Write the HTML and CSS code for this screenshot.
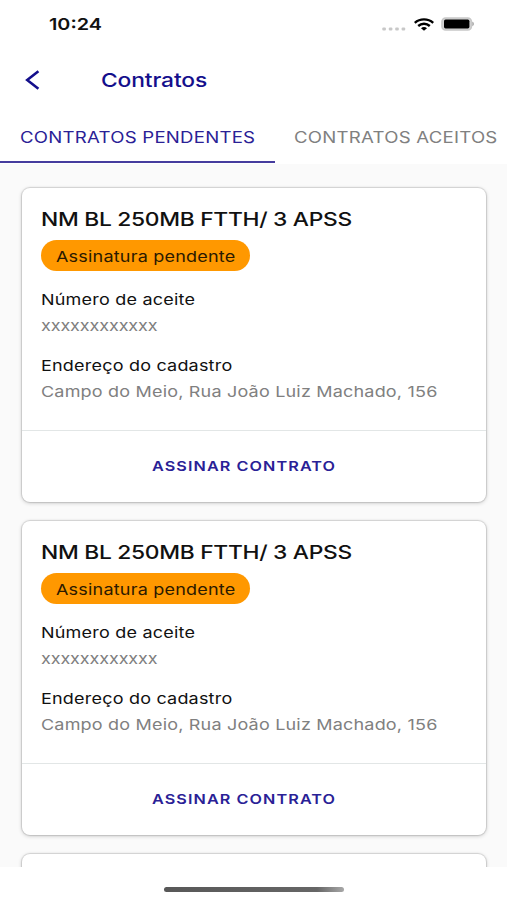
FILE: index.html
```
<!DOCTYPE html>
<html lang="pt-BR">
<head>
  <meta charset="UTF-8" />
  <title>Contratos</title>
  <link rel="stylesheet" href="styles.css">
</head>
<body>
  <!-- Barra de status -->
  <div class="status">
    <span class="hora largo">10:24</span>
    <div class="icones">
      <svg class="sinal" width="24" height="4" viewBox="0 0 24 4" fill="#c8c8c8">
        <rect x="0.3" y="0.5" width="3.6" height="3" rx="1" />
        <rect x="6.8" y="0.5" width="3.6" height="3" rx="1" />
        <rect x="13.2" y="0.5" width="3.6" height="3" rx="1" />
        <rect x="19.6" y="0.5" width="3.6" height="3" rx="1" />
      </svg>
      <svg class="wifi" width="20" height="13" viewBox="0 0 20 13" fill="none" stroke="#000" stroke-width="2.4">
        <path d="M0.8 4.8C6 0.2 14 0.2 19.2 4.8" />
        <path d="M4.2 8C7.5 5 12.5 5 15.8 8" />
        <path d="M7 10.2C8.8 8.7 11.2 8.7 13 10.2L10 12.7Z" fill="#000" stroke="none" />
      </svg>
      <svg class="bateria" width="34" height="14" viewBox="0 0 34 14">
        <rect x="1" y="1" width="29.4" height="12" rx="3.6" fill="#d4d4d4" stroke="#c8c8c8" stroke-width="1.6" />
        <rect x="3" y="2.6" width="25.4" height="8.8" rx="1.6" fill="#000" />
        <path d="M31.2 4.8C33.6 5.4 33.6 8.6 31.2 9.2Z" fill="#b0b0b0" />
      </svg>
    </div>
  </div>

  <!-- Cabeçalho -->
  <div class="topo">
    <svg class="voltar" width="16" height="20" viewBox="0 0 16 20" fill="none" stroke="#140f8c" stroke-width="2.6">
      <path d="M13.4 1.2L2.2 10L13.4 18.8" />
    </svg>
    <h1 class="largo">Contratos</h1>
  </div>

  <div class="abas">
    <div class="aba ativa"><span class="largo">CONTRATOS PENDENTES</span></div>
    <div class="aba"><span class="largo">CONTRATOS ACEITOS</span></div>
  </div>

  <!-- Lista de contratos -->
  <div class="lista">
    <div class="card">
      <div class="dados">
        <h2 class="largo">NM BL 250MB FTTH/ 3 APSS</h2>
        <div class="etiqueta"><span class="largo">Assinatura pendente</span></div>
        <p class="rotulo"><span class="largo">Número de aceite</span></p>
        <p class="valor"><span class="largo codigo">xxxxxxxxxxxx</span></p>
        <p class="rotulo"><span class="largo">Endereço do cadastro</span></p>
        <p class="valor"><span class="largo">Campo do Meio, Rua João Luiz Machado, 156</span></p>
      </div>
      <button class="assinar"><span class="largo">ASSINAR CONTRATO</span></button>
    </div>

    <div class="card">
      <div class="dados">
        <h2 class="largo">NM BL 250MB FTTH/ 3 APSS</h2>
        <div class="etiqueta"><span class="largo">Assinatura pendente</span></div>
        <p class="rotulo"><span class="largo">Número de aceite</span></p>
        <p class="valor"><span class="largo codigo">xxxxxxxxxxxx</span></p>
        <p class="rotulo"><span class="largo">Endereço do cadastro</span></p>
        <p class="valor"><span class="largo">Campo do Meio, Rua João Luiz Machado, 156</span></p>
      </div>
      <button class="assinar"><span class="largo">ASSINAR CONTRATO</span></button>
    </div>

    <div class="card"></div>
  </div>

  <div class="rodape">
    <div class="barra"></div>
  </div>
</body>
</html>
```

FILE: styles.css
```
* {
  box-sizing: border-box;
}
body {
  margin: 0;
  height: 900px;
  display: flex;
  flex-direction: column;
  overflow: hidden;
  font-family: Inter, "Liberation Sans", sans-serif;
  background-color: #fff;
  color: #111;
}
h1, h2, p {
  margin: 0;
}

/* Letras mais largas que o normal */
.largo {
  display: inline-block;
  white-space: nowrap;
  transform: scaleX(1.2);
  transform-origin: left center;
}

/* Barra de status */
.status {
  height: 48px;
  flex: none;
  display: flex;
  justify-content: space-between;
  padding: 0 32px 0 49px;
}
.hora {
  font-size: 16.5px;
  font-weight: 600;
  line-height: 49px;
}
.icones {
  display: flex;
  align-items: center;
  height: 48px;
}
.sinal {
  margin: 9px 8px 0 0;
}
.wifi {
  margin-right: 7px;
}

/* Cabeçalho */
.topo {
  height: 64px;
  flex: none;
  display: flex;
  align-items: center;
  padding-left: 25px;
}
.topo h1 {
  margin-left: 60px;
  font-size: 19px;
  font-weight: 500;
  letter-spacing: -0.1px;
  color: #140f8c;
}
.abas {
  height: 52px;
  flex: none;
  display: flex;
}
.aba {
  flex: 1;
  padding-left: 19px;
  font-size: 15.5px;
  letter-spacing: 0.2px;
  line-height: 51px;
  color: #808080;
}
.ativa {
  flex: 0 0 275px;
  height: 51px;
  padding-left: 20px;
  color: #2a2196;
  border-bottom: 2px solid #453c9e;
}

/* Lista de contratos */
.lista {
  flex: 1;
  min-height: 0;
  overflow: hidden;
  display: flex;
  flex-direction: column;
  gap: 19px;
  padding: 24px 21px 0 22px;
  background-color: #fafafa;
}
.card {
  height: 314px;
  flex: none;
  display: flex;
  flex-direction: column;
  border-radius: 8px;
  background-color: #fff;
  box-shadow: 0 1px 4px rgba(0,0,0,0.2), 0 0 1px 1px rgba(0,0,0,0.12);
}
.dados {
  height: 242px;
  padding: 18px 0 0 19px;
}
.card h2 {
  display: block;
  width: max-content;
  font-size: 19px;
  font-weight: 500;
  line-height: 28px;
  letter-spacing: -0.25px;
}
.etiqueta {
  width: 209px;
  height: 31px;
  margin: 6px 0 17px;
  padding-left: 15px;
  border-radius: 16px;
  background-color: #ff9800;
  color: #2b1a00;
  font-size: 15px;
  letter-spacing: 0.17px;
  line-height: 33px;
}
.rotulo {
  font-size: 15px;
  letter-spacing: 0.17px;
  line-height: 24px;
}
.valor {
  margin: 1px 0 16px;
  font-size: 15px;
  letter-spacing: 0.16px;
  line-height: 25px;
  color: #808080;
}
.codigo {
  letter-spacing: -0.1px;
}
.assinar {
  flex: 1;
  border: 0;
  border-top: 1px solid #e2e6e6;
  padding: 0 0 1px 130px;
  background: none;
  font-family: inherit;
  font-size: 13.5px;
  font-weight: 600;
  letter-spacing: 0.9px;
  text-align: left;
  color: #2a2196;
}

.rodape {
  height: 33px;
  flex: none;
  padding: 20px 0 0 164px;
}
.barra {
  width: 180px;
  height: 5px;
  border-radius: 3px;
  background: linear-gradient(to right, #585858, #666 85%, #a8a8a8);
}
```
